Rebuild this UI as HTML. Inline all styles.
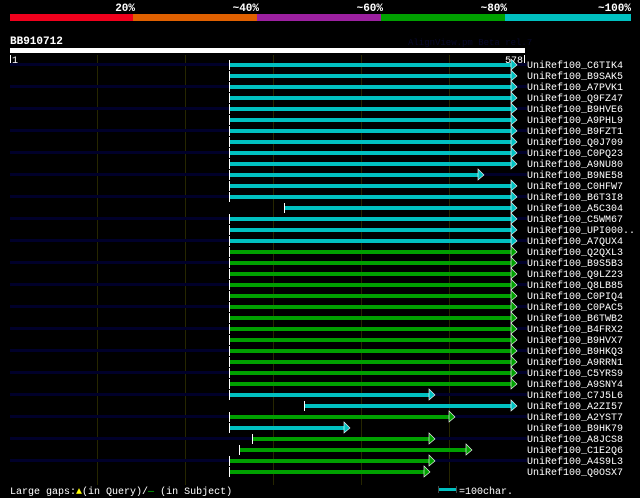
<!DOCTYPE html><html><head><style>body{margin:0;background:#000}svg{display:block}text{font-family:"Liberation Mono",monospace;fill:#fff}</style></head><body>
<svg width="640" height="498" xmlns="http://www.w3.org/2000/svg">
<rect width="640" height="498" fill="#000"/>
<g font-size="11" font-weight="bold" text-anchor="end">
<text x="135" y="11">20%</text><text x="259" y="11">~40%</text><text x="383" y="11">~60%</text><text x="507" y="11">~80%</text><text x="631" y="11">~100%</text></g>
<rect x="10" y="14" width="123" height="7" fill="#f0001c"/>
<rect x="133" y="14" width="124" height="7" fill="#e06000"/>
<rect x="257" y="14" width="124" height="7" fill="#9c20a0"/>
<rect x="381" y="14" width="124" height="7" fill="#00a000"/>
<rect x="505" y="14" width="126" height="7" fill="#00c0c0"/>
<text x="10" y="44" font-size="11" font-weight="bold">BB910712</text>
<text x="408" y="45" font-size="9" style="fill:#08082a">AlignView.pm Beta rel.7</text>
<rect x="10" y="48" width="515" height="5" fill="#fff"/>
<rect x="10" y="55" width="1" height="10" fill="#fff"/><text x="12" y="63" font-size="10">1</text>
<rect x="524" y="55" width="1" height="10" fill="#fff"/><text x="523" y="63" font-size="10" text-anchor="end">578</text>
<g fill="#262600"><rect x="97" y="55" width="1" height="430"/><rect x="185" y="55" width="1" height="430"/><rect x="273" y="55" width="1" height="430"/><rect x="361" y="55" width="1" height="430"/><rect x="449" y="55" width="1" height="430"/></g>
<text x="10" y="494" font-size="10">Large gaps:<tspan style="fill:#ff0">▲</tspan>(in Query)/<tspan style="fill:#0c0">—</tspan> (in Subject)</text>
<rect x="438" y="488" width="18" height="3" fill="#00c0c0"/><rect x="438" y="486" width="1" height="7" fill="#444"/><rect x="456" y="486" width="1" height="7" fill="#444"/>
<text x="459" y="494" font-size="10">=100char.</text>
<g id="g"></g>
</svg>
<script>
var R=[["C6TIK4",229,515,"c"],["B9SAK5",229,515,"c"],["A7PVK1",229,515,"c"],["Q9FZ47",229,515,"c"],["B9HVE6",229,515,"c"],["A9PHL9",229,515,"c"],["B9FZT1",229,515,"c"],["Q0J709",229,515,"c"],["C0PQ23",229,515,"c"],["A9NU80",229,515,"c"],["B9NE58",229,482,"c"],["C0HFW7",229,515,"c"],["B6T3I8",229,515,"c"],["A5C304",284,515,"c"],["C5WM67",229,515,"c"],["UPI000..",229,515,"c"],["A7QUX4",229,515,"c"],["Q2QXL3",229,515,"g"],["B9S5B3",229,515,"g"],["Q9LZ23",229,515,"g"],["Q8LB85",229,515,"g"],["C0PIQ4",229,515,"g"],["C0PAC5",229,515,"g"],["B6TWB2",229,515,"g"],["B4FRX2",229,515,"g"],["B9HVX7",229,515,"g"],["B9HKQ3",229,515,"g"],["A9RRN1",229,515,"g"],["C5YRS9",229,515,"g"],["A9SNY4",229,515,"g"],["C7J5L6",229,433,"c"],["A2ZI57",304,515,"c"],["A2YST7",229,453,"g"],["B9HK79",229,348,"c"],["A8JCS8",252,433,"g"],["C1E2Q6",239,470,"g"],["A4S9L3",229,433,"g"],["Q0OSX7",229,428,"g"]];
var s="";R.forEach(function(r,i){var y=64+11*i,c=r[3]=="c"?"#00c0c0":"#00a000";
if(i%2==0)s+='<rect x="10" y="'+(y-1)+'" width="517" height="3" fill="#00002a"/>';
s+='<rect x="'+r[1]+'" y="'+(y-1)+'" width="'+(r[2]-r[1]-3)+'" height="4" fill="'+c+'"/>';
s+='<rect x="'+r[1]+'" y="'+(y-4)+'" width="1" height="10" fill="#fff"/>';
s+='<polygon points="'+(r[2]-4)+','+(y-5)+' '+(r[2]+2)+','+(y+1)+' '+(r[2]-4)+','+(y+6)+'" fill="'+c+'" stroke="#fff" stroke-width="0.6"/>';
s+='<text x="527" y="'+(y+4)+'" font-size="10">UniRef100_'+r[0]+'</text>';});
document.getElementById("g").innerHTML=s;
</script>
</body></html>
